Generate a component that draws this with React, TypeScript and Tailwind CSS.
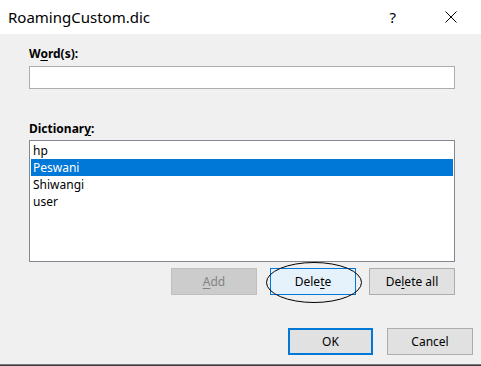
const words = ['hp', 'Peswani', 'Shiwangi', 'user']

const Btn = ({
  children,
  className = '',
}: {
  children: React.ReactNode
  className?: string
}) => (
  <button
    type="button"
    className={`flex h-[27px] w-[86px] items-center justify-center text-[12px] text-black ${className}`}
  >
    {children}
  </button>
)

export default function App() {
  return (
    <div
      className="flex h-[366px] w-[481px] flex-col overflow-hidden bg-[#f0f0f0]"
      style={{ fontFamily: '"Noto Sans", "Open Sans", sans-serif' }}
    >
      {/* title bar */}
      <div className="flex h-[34px] shrink-0 items-center bg-white pl-[8px]">
        <span className="text-[15px] text-black">RoamingCustom.dic</span>
        <span className="ml-auto mr-[49px] text-[15px] text-black">?</span>
        <svg width="12" height="12" viewBox="0 0 12 12" className="mr-[24px]">
          <path d="M0.5 0.5L11.5 11.5M11.5 0.5L0.5 11.5" stroke="#000" strokeWidth="1" />
        </svg>
      </div>

      <div className="flex flex-1 flex-col pl-[29px] pr-[26px] pt-[12px]">
        <div className="h-[16px] text-[12px] font-bold leading-[16px] text-black">
          W<span className="underline underline-offset-2">o</span>rd(s):
        </div>
        <div className="mt-[4px] h-[23px] border border-[#adadad] bg-white" />

        <div className="mt-[32px] h-[16px] text-[12px] font-bold leading-[16px] text-black">
          Dictionar<span className="underline underline-offset-2">y</span>:
        </div>
        <div className="mt-[3px] h-[122px] border border-[#828790] bg-white p-px">
          {words.map((w) => (
            <div
              key={w}
              className={`h-[17px] pl-[2px] text-[12px] leading-[17px] ${
                w === 'Peswani' ? 'bg-[#0078d7] text-white' : 'text-black'
              }`}
            >
              {w}
            </div>
          ))}
        </div>

        <div className="mt-[6px] flex justify-end gap-[13px]">
          <Btn className="border border-[#bfbfbf] bg-[#cccccc] !text-[#838383]">
            <span className="underline underline-offset-2">A</span>dd
          </Btn>
          <div className="relative">
            <Btn className="border border-[#0078d7] bg-[#e5f1fb]">
              Dele<span className="underline underline-offset-2">t</span>e
            </Btn>
            <svg
              className="pointer-events-none absolute left-[-4px] top-[-6px]"
              width="96"
              height="41"
              viewBox="0 0 96 41"
            >
              <ellipse cx="48" cy="20.5" rx="47.5" ry="20" fill="none" stroke="#000" strokeWidth="1" />
            </svg>
          </div>
          <Btn className="border border-[#adadad] bg-[#e1e1e1]">
            De<span className="underline underline-offset-2">l</span>ete all
          </Btn>
        </div>

        <div className="-mr-[18px] mt-[33px] flex justify-end gap-[14px]">
          <button
            type="button"
            className="flex h-[27px] w-[85px] items-center justify-center border-2 border-[#0078d7] bg-[#e1e1e1] text-[12px] text-black"
          >
            OK
          </button>
          <button
            type="button"
            className="flex h-[27px] w-[86px] items-center justify-center border border-[#adadad] bg-[#e1e1e1] text-[12px] text-black"
          >
            Cancel
          </button>
        </div>
      </div>

      <div className="h-px shrink-0 bg-[#7a7a7a]" />
      <div className="h-px shrink-0 bg-[#3a3a3a]" />
    </div>
  )
}
